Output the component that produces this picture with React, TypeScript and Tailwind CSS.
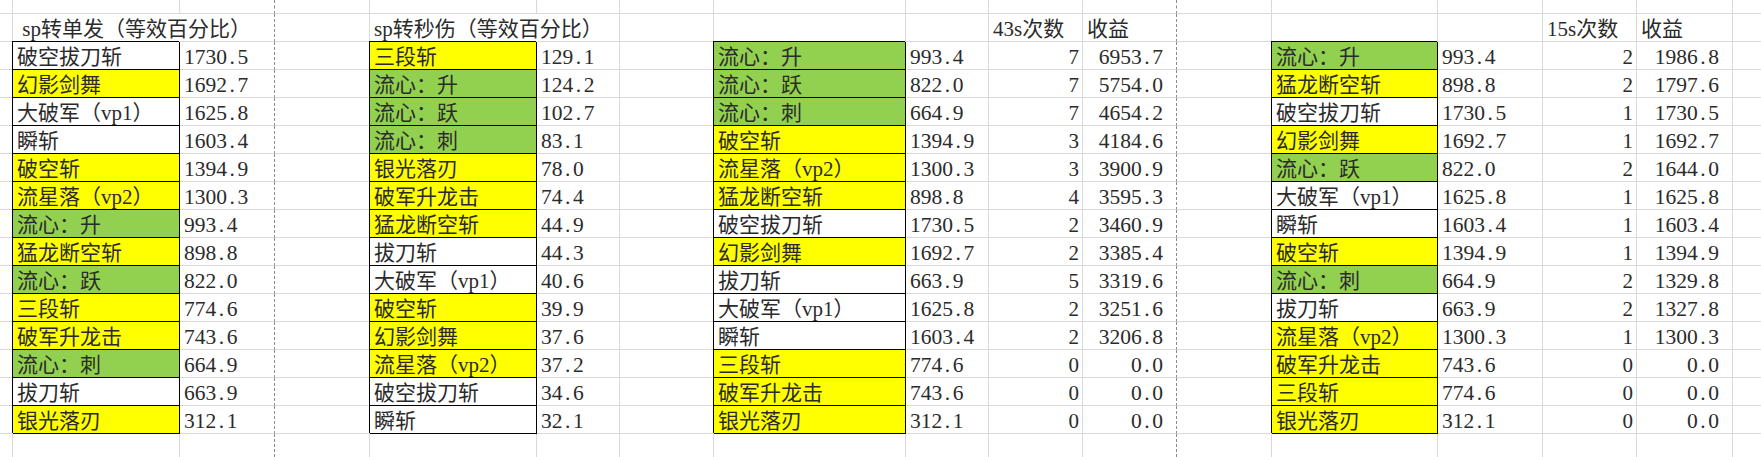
import clsx from "clsx";
import type { ReactNode } from "react";

type Fill = "y" | "g" | "w";
type Entry = [string, Fill, string, number?, string?];

type Cell = {
  text?: ReactNode;
  fill?: Fill;
  boxed?: boolean;
  align?: "left" | "right" | "money";
  dashed?: boolean;
  open?: boolean;
};

const single: Entry[] = [
  ["破空拔刀斩", "w", "1730.5"],
  ["幻影剑舞", "y", "1692.7"],
  ["大破军（vp1）", "w", "1625.8"],
  ["瞬斩", "w", "1603.4"],
  ["破空斩", "y", "1394.9"],
  ["流星落（vp2）", "y", "1300.3"],
  ["流心：升", "g", "993.4"],
  ["猛龙断空斩", "y", "898.8"],
  ["流心：跃", "g", "822.0"],
  ["三段斩", "y", "774.6"],
  ["破军升龙击", "y", "743.6"],
  ["流心：刺", "g", "664.9"],
  ["拔刀斩", "w", "663.9"],
  ["银光落刃", "y", "312.1"],
];

const dps: Entry[] = [
  ["三段斩", "y", "129.1"],
  ["流心：升", "g", "124.2"],
  ["流心：跃", "g", "102.7"],
  ["流心：刺", "g", "83.1"],
  ["银光落刃", "y", "78.0"],
  ["破军升龙击", "y", "74.4"],
  ["猛龙断空斩", "y", "44.9"],
  ["拔刀斩", "w", "44.3"],
  ["大破军（vp1）", "w", "40.6"],
  ["破空斩", "y", "39.9"],
  ["幻影剑舞", "y", "37.6"],
  ["流星落（vp2）", "y", "37.2"],
  ["破空拔刀斩", "w", "34.6"],
  ["瞬斩", "w", "32.1"],
];

const in43: Entry[] = [
  ["流心：升", "g", "993.4", 7, "6953.7"],
  ["流心：跃", "g", "822.0", 7, "5754.0"],
  ["流心：刺", "g", "664.9", 7, "4654.2"],
  ["破空斩", "y", "1394.9", 3, "4184.6"],
  ["流星落（vp2）", "y", "1300.3", 3, "3900.9"],
  ["猛龙断空斩", "y", "898.8", 4, "3595.3"],
  ["破空拔刀斩", "w", "1730.5", 2, "3460.9"],
  ["幻影剑舞", "y", "1692.7", 2, "3385.4"],
  ["拔刀斩", "w", "663.9", 5, "3319.6"],
  ["大破军（vp1）", "w", "1625.8", 2, "3251.6"],
  ["瞬斩", "w", "1603.4", 2, "3206.8"],
  ["三段斩", "y", "774.6", 0, "0.0"],
  ["破军升龙击", "y", "743.6", 0, "0.0"],
  ["银光落刃", "y", "312.1", 0, "0.0"],
];

const in15: Entry[] = [
  ["流心：升", "g", "993.4", 2, "1986.8"],
  ["猛龙断空斩", "y", "898.8", 2, "1797.6"],
  ["破空拔刀斩", "w", "1730.5", 1, "1730.5"],
  ["幻影剑舞", "y", "1692.7", 1, "1692.7"],
  ["流心：跃", "g", "822.0", 2, "1644.0"],
  ["大破军（vp1）", "w", "1625.8", 1, "1625.8"],
  ["瞬斩", "w", "1603.4", 1, "1603.4"],
  ["破空斩", "y", "1394.9", 1, "1394.9"],
  ["流心：刺", "g", "664.9", 2, "1329.8"],
  ["拔刀斩", "w", "663.9", 2, "1327.8"],
  ["流星落（vp2）", "y", "1300.3", 1, "1300.3"],
  ["破军升龙击", "y", "743.6", 0, "0.0"],
  ["三段斩", "y", "774.6", 0, "0.0"],
  ["银光落刃", "y", "312.1", 0, "0.0"],
];

// SimSun-style number: the dot takes a half-width cell like the digits
const Num = ({ v }: { v: string }) => {
  const [a, b] = v.split(".");
  return (
    <span className="text-[21.5px]">
      {a}
      <span className="inline-block w-[10.5px] text-center">.</span>
      {b}
    </span>
  );
};

const ROWS = 17;
const COLS = 17;

function buildSheet() {
  const sheet: Cell[][] = Array.from({ length: ROWS }, () =>
    Array.from({ length: COLS }, () => ({}) as Cell)
  );
  for (let r = 0; r < ROWS; r++) {
    sheet[r][2].dashed = true;
    sheet[r][10].dashed = true;
  }

  sheet[1][1] = { text: "\u00a0sp转单发（等效百分比）", open: true };
  sheet[1][4] = { text: "sp转秒伤（等效百分比）", open: true };
  sheet[1][9] = { text: "43s次数" };
  sheet[1][10] = { text: "收益", dashed: true };
  sheet[1][14] = { text: "15s次数" };
  sheet[1][15] = { text: "收益" };

  const place = (rows: Entry[], col: number) => {
    rows.forEach(([name, fill, val, n, total], i) => {
      const r = i + 2;
      sheet[r][col] = { text: name, fill, boxed: true };
      sheet[r][col + 1] = { ...sheet[r][col + 1], text: <Num v={val} /> };
      if (n !== undefined) {
        sheet[r][col + 2] = { text: n, align: "right" };
        sheet[r][col + 3] = {
          ...sheet[r][col + 3],
          text: <Num v={total!} />,
          align: "money",
        };
      }
    });
  };
  place(single, 1);
  place(dps, 4);
  place(in43, 7);
  place(in15, 12);
  return sheet;
}

export default function App() {
  const sheet = buildSheet();
  return (
    <div className="w-[1761px] h-[457px] overflow-hidden bg-white text-[21px] text-[#2b2b2b] font-['Liberation_Serif','Noto_Sans_CJK_SC',serif]">
      <div className="grid grid-cols-[13px_167px_95px_95px_167px_83px_94px_192px_83px_94px_94px_95px_166px_105px_94px_96px_60px] grid-rows-[14px_repeat(16,28px)]">
        {sheet.map((row, r) =>
          row.map((c, i) => (
            <div
              key={`${r}-${i}`}
              className={clsx(
                "flex items-end whitespace-nowrap border-r border-b pb-[1px] leading-[21px]",
                c.boxed
                  ? "border-r-black border-b-black shadow-[-1px_-1px_0_0_#000]"
                  : c.open
                    ? "border-r-transparent border-b-[#dadada]"
                    : c.dashed
                      ? "border-r-[#8c8c8c] border-b-[#dadada] [border-right-style:dashed]"
                      : "border-r-[#dadada] border-b-[#dadada]",
                c.fill === "y" && "bg-[#ffff00]",
                c.fill === "g" && "bg-[#92d050]",
                c.align === "right"
                  ? "justify-end pr-[3px]"
                  : c.align === "money"
                    ? "justify-end pr-[13px]"
                    : "pl-[4px]"
              )}
            >
              {c.text}
            </div>
          ))
        )}
      </div>
    </div>
  );
}
